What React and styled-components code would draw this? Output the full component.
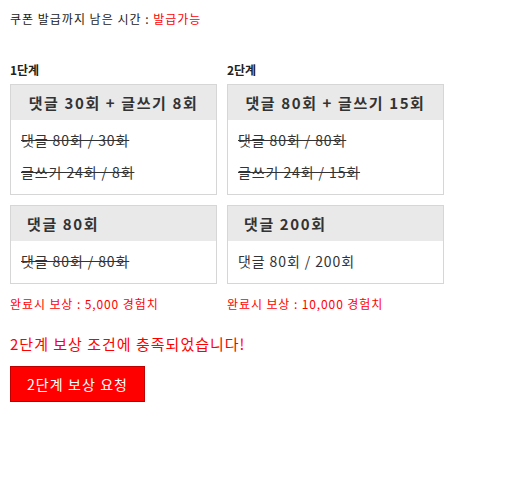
import styled, { createGlobalStyle } from 'styled-components';

const GlobalStyle = createGlobalStyle`
    body {
        margin: 0;
        padding: 10px;
        font-family: "Noto Sans CJK KR", "Noto Sans", sans-serif;
        color: #222;
        background: #fff;
    }
`;

const stages = [
    {
        label: '1단계',
        width: 207,
        missions: [
            {
                title: '댓글 30회 + 글쓰기 8회',
                center: true,
                lines: [
                    { text: '댓글 80회 / 30회', done: true },
                    { text: '글쓰기 24회 / 8회', done: true },
                ],
            },
            {
                title: '댓글 80회',
                lines: [{ text: '댓글 80회 / 80회', done: true }],
            },
        ],
        reward: '완료시 보상 : 5,000 경험치',
    },
    {
        label: '2단계',
        width: 217,
        missions: [
            {
                title: '댓글 80회 + 글쓰기 15회',
                center: true,
                lines: [
                    { text: '댓글 80회 / 80회', done: true },
                    { text: '글쓰기 24회 / 15회', done: true },
                ],
            },
            {
                title: '댓글 200회',
                lines: [{ text: '댓글 80회 / 200회', done: false }],
            },
        ],
        reward: '완료시 보상 : 10,000 경험치',
    },
];

export default function App() {
    return (
        <>
            <GlobalStyle />
            <Timer>
                쿠폰 발급까지 남은 시간 : <Red>발급가능</Red>
            </Timer>
            <Stages>
                {stages.map((stage) => (
                    <Stage key={stage.label} $width={stage.width}>
                        <StageLabel>{stage.label}</StageLabel>
                        {stage.missions.map((m) => (
                            <Card key={m.title}>
                                <CardHeader $center={m.center}>{m.title}</CardHeader>
                                <CardBody>
                                    {m.lines.map((l) => (
                                        <Line key={l.text} $done={l.done}>{l.text}</Line>
                                    ))}
                                </CardBody>
                            </Card>
                        ))}
                        <Reward>{stage.reward}</Reward>
                    </Stage>
                ))}
            </Stages>
            <Notice>2단계 보상 조건에 충족되었습니다!</Notice>
            <RequestButton>2단계 보상 요청</RequestButton>
        </>
    );
}

const Timer = styled.div`
    font-size: 12px;
    line-height: 18px;
    letter-spacing: 1px;
`;

const Red = styled.span`
    color: #ff0000;
`;

const Stages = styled.div`
    display: flex;
    gap: 10px;
    margin-top: 33px;
`;

const Stage = styled.div`
    width: ${(p) => p.$width}px;
    display: flex;
    flex-direction: column;
`;

const StageLabel = styled.div`
    font-size: 12px;
    font-weight: bold;
    line-height: 18px;
    margin-bottom: 5px;
`;

const Card = styled.div`
    border: 1px solid #d6d6d6;
    margin-bottom: 10px;
`;

const CardHeader = styled.div`
    background: #e9e9e9;
    height: 35px;
    line-height: 35px;
    font-size: 15px;
    font-weight: bold;
    letter-spacing: 1.6px;
    color: #333;
    padding: 0 16px;
    white-space: nowrap;
    text-align: ${(p) => (p.$center ? 'center' : 'left')};
`;

const CardBody = styled.div`
    padding: 4px 10px 6px;
`;

const Line = styled.div`
    font-size: 14px;
    line-height: 32px;
    letter-spacing: 0.9px;
    color: #333;
    text-decoration: ${(p) => (p.$done ? 'line-through' : 'none')};
`;

const Reward = styled.div`
    font-size: 12px;
    line-height: 18px;
    letter-spacing: 0.9px;
    color: #ff0000;
    margin-top: 1px;
`;

const Notice = styled.div`
    font-size: 15px;
    line-height: 20px;
    letter-spacing: 1px;
    color: #ff0000;
    margin-top: 21px;
`;

const RequestButton = styled.button`
    margin-top: 12px;
    width: 135px;
    height: 36px;
    background: #ff0000;
    border: 1px solid #c00000;
    color: #fff;
    font-family: inherit;
    font-size: 14px;
    letter-spacing: 1.1px;
    padding: 0;
    cursor: pointer;
`;
